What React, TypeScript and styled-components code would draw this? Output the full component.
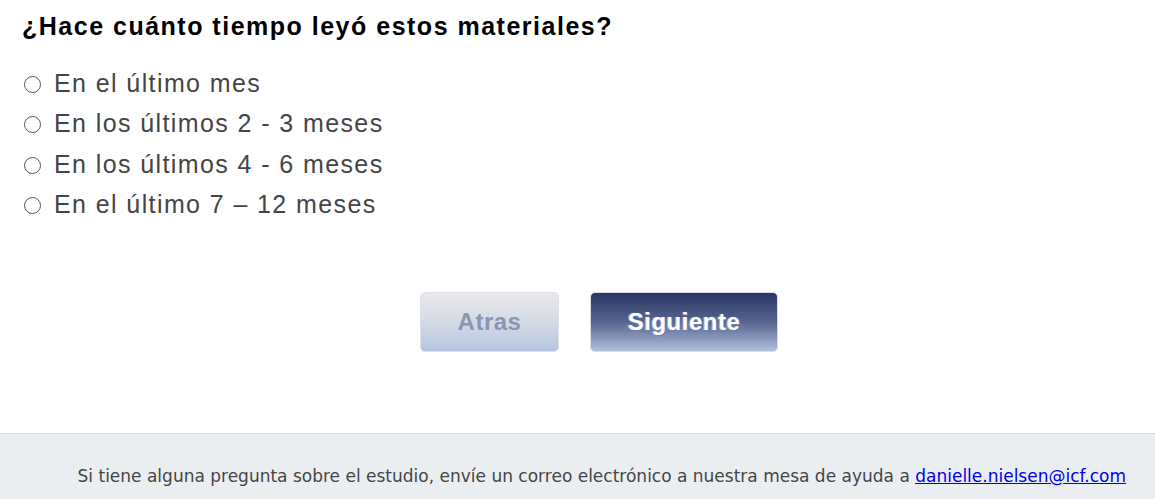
import styled, { createGlobalStyle } from 'styled-components';

const GlobalStyle = createGlobalStyle`
  html, body {
    margin: 0;
    padding: 0;
    background: #fff;
  }
  body {
    font-family: 'Liberation Sans', Arial, sans-serif;
  }
`;

const options = [
  'En el último mes',
  'En los últimos 2 - 3 meses',
  'En los últimos 4 - 6 meses',
  'En el último 7 – 12 meses',
];

export default function App() {
  return (
    <>
      <GlobalStyle />
      <StyledPage>
        <StyledMain>
          <StyledQuestion>¿Hace cuánto tiempo leyó estos materiales?</StyledQuestion>
          <StyledOptions>
            {options.map((text) => (
              <StyledOption key={text}>
                <StyledRadio />
                <StyledOptionLabel>{text}</StyledOptionLabel>
              </StyledOption>
            ))}
          </StyledOptions>
          <StyledNav>
            <StyledNavButton variant='back'>Atras</StyledNavButton>
            <StyledNavButton variant='next'>Siguiente</StyledNavButton>
          </StyledNav>
        </StyledMain>
        <StyledFooter>
          <StyledFooterText>
            Si tiene alguna pregunta sobre el estudio, envíe un correo electrónico a nuestra mesa de ayuda a{' '}
            <StyledMail href='#'>danielle.nielsen@icf.com</StyledMail>
          </StyledFooterText>
        </StyledFooter>
      </StyledPage>
    </>
  );
}

const StyledPage = styled.div`
  width: 1155px;
  height: 499px;
  display: flex;
  flex-direction: column;
  overflow: hidden;
`;

const StyledMain = styled.div`
  flex: 1;
  padding: 11px 0 0 22px;
`;

const StyledQuestion = styled.h1`
  margin: 0;
  font-size: 25px;
  line-height: 30px;
  letter-spacing: 1.5px;
  font-weight: 700;
  color: #000;
`;

const StyledOptions = styled.div`
  margin-top: 22px;
  display: flex;
  flex-direction: column;
`;

const StyledOption = styled.label`
  display: flex;
  align-items: center;
  height: 40.5px;
  cursor: pointer;
`;

const StyledRadio = styled.span`
  width: 17px;
  height: 17px;
  box-sizing: border-box;
  border: 1.5px solid #555;
  border-radius: 50%;
  margin: 2px 13px 0 2px;
  background: #fff;
`;

const StyledOptionLabel = styled.span`
  font-size: 25px;
  letter-spacing: 1.4px;
  color: #454545;
`;

const StyledNav = styled.div`
  margin-top: 67px;
  display: flex;
  gap: 31px;
  padding-left: 398px;
`;

const StyledNavButton = styled.button<{ variant: 'back' | 'next' }>`
  height: 60px;
  width: ${({ variant }) => (variant === 'back' ? '139px' : '188px')};
  border-radius: 5px;
  border: 1px solid ${({ variant }) => (variant === 'back' ? '#dde0e6' : '#d6dae3')};
  font-family: 'Liberation Sans', Arial, sans-serif;
  font-size: 24px;
  letter-spacing: 0.5px;
  font-weight: 700;
  cursor: pointer;
  background: ${({ variant }) =>
    variant === 'back'
      ? 'linear-gradient(to bottom, #e8e8ea 0%, #d4dae5 50%, #b6c6e1 100%)'
      : 'linear-gradient(to bottom, #2a3663 0%, #56648f 50%, #b2c0dc 100%)'};
  color: ${({ variant }) => (variant === 'back' ? '#8797b3' : '#ffffff')};
  text-shadow: ${({ variant }) =>
    variant === 'back' ? 'none' : '1px 1px 1px #6f7fb0, -1px 0 1px #9fb0dd'};
`;

const StyledFooter = styled.footer`
  height: 65px;
  border-top: 1px solid #dadde1;
  background: #ebeef1;
  display: flex;
  justify-content: flex-end;
  padding: 0 29px 0 0;
`;

const StyledFooterText = styled.p`
  margin: 32px 0 0;
  font-family: 'DejaVu Sans', Verdana, sans-serif;
  font-size: 17px;
  color: #454545;
`;

const StyledMail = styled.a`
  color: #0000ee;
  text-decoration: underline;
`;
